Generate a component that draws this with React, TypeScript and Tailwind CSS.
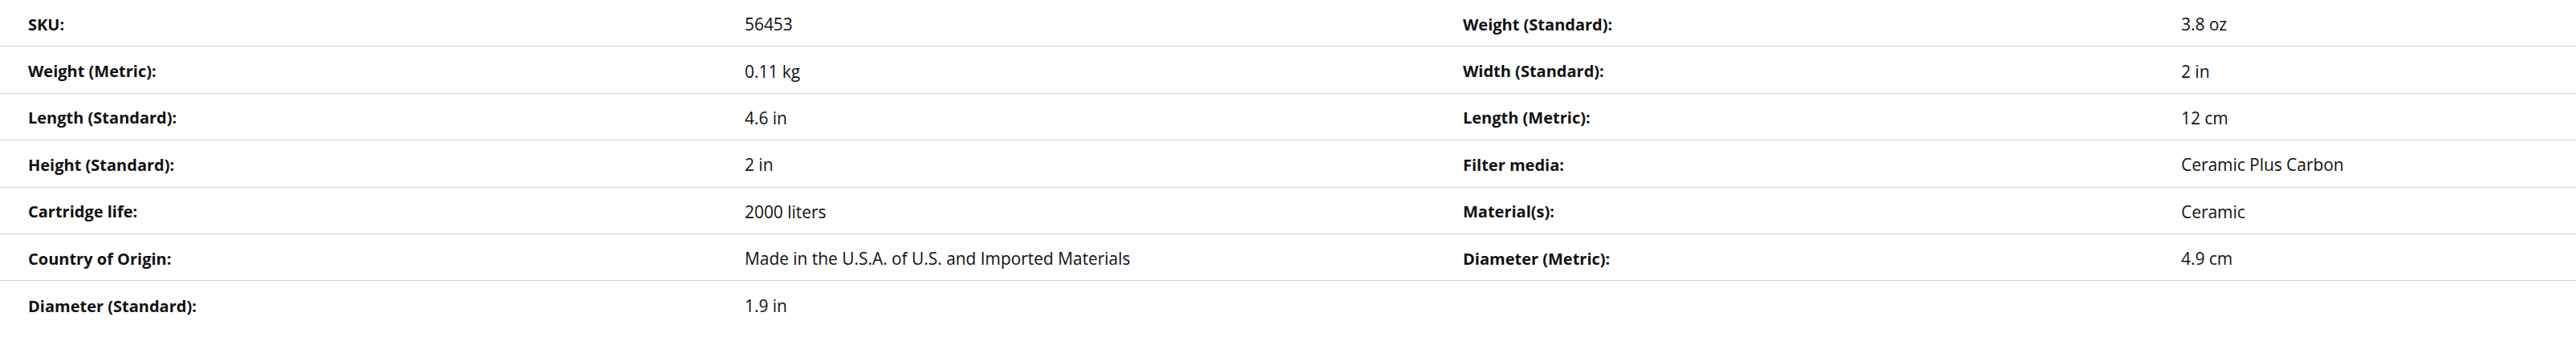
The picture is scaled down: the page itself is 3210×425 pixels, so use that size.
import React from "react";

const rows: [string, string, string, string][] = [
  ["SKU:", "56453", "Weight (Standard):", "3.8 oz"],
  ["Weight (Metric):", "0.11 kg", "Width (Standard):", "2 in"],
  ["Length (Standard):", "4.6 in", "Length (Metric):", "12 cm"],
  ["Height (Standard):", "2 in", "Filter media:", "Ceramic Plus Carbon"],
  ["Cartridge life:", "2000 liters", "Material(s):", "Ceramic"],
  ["Country of Origin:", "Made in the U.S.A. of U.S. and Imported Materials", "Diameter (Metric):", "4.9 cm"],
  ["Diameter (Standard):", "1.9 in", "", ""],
];

export default function App() {
  return (
    <div
      className="w-[3210px] h-[425px] bg-white text-[#111] text-[20px]"
      style={{ fontFamily: '"Open Sans", "Noto Sans", Arial, sans-serif' }}
    >
      {rows.map((r, i) => (
        <div
          key={i}
          className={
            "grid grid-cols-[893px_895px_895px_1fr] h-[58.4px] items-center " +
            (i < rows.length - 1 ? "border-b border-[#d2d2d2]" : "")
          }
        >
          <div className="pl-[35px] pt-[4px] font-bold leading-none whitespace-nowrap">{r[0]}</div>
          <div className="pl-[35px] pt-[4px] text-[20.9px] leading-none whitespace-nowrap">{r[1]}</div>
          <div className="pl-[35px] pt-[4px] font-bold leading-none whitespace-nowrap">{r[2]}</div>
          <div className="pl-[35px] pt-[4px] text-[20.9px] leading-none whitespace-nowrap">{r[3]}</div>
        </div>
      ))}
    </div>
  );
}
